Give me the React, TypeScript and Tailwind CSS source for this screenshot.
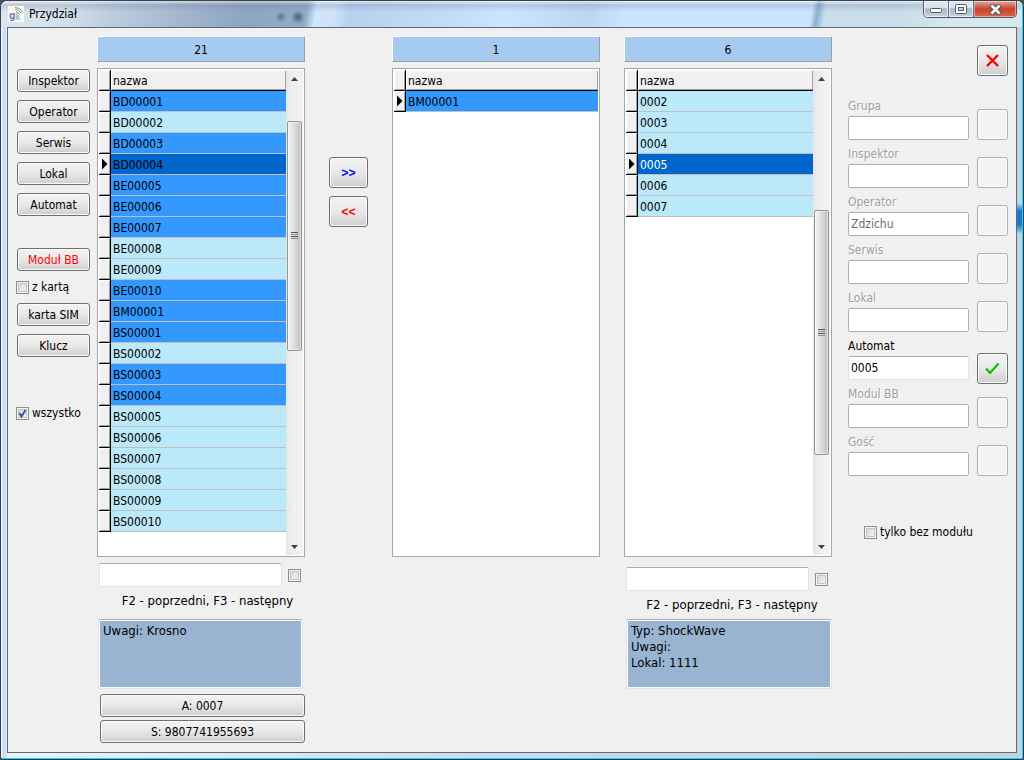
import { useState, type ReactNode } from "react";

type Tone = "blue" | "light" | "selected";

type Row = {
  name: string;
  tone: Tone;
  current?: boolean;
  lightText?: boolean;
};

type Scroll = {
  before: number;
  thumb: number;
  after: number;
};

type Field = {
  id: string;
  label: string;
  value: string;
  enabled?: boolean;
};

const toneClass: Record<Tone, string> = {
  blue: "bg-[#3399ff]",
  light: "bg-[#bbe9f9]",
  selected: "bg-[#0066cc]",
};

const modules: Row[] = [
  { name: "BD00001", tone: "blue" },
  { name: "BD00002", tone: "light" },
  { name: "BD00003", tone: "blue" },
  { name: "BD00004", tone: "selected", current: true },
  { name: "BE00005", tone: "blue" },
  { name: "BE00006", tone: "blue" },
  { name: "BE00007", tone: "blue" },
  { name: "BE00008", tone: "light" },
  { name: "BE00009", tone: "light" },
  { name: "BE00010", tone: "blue" },
  { name: "BM00001", tone: "blue" },
  { name: "BS00001", tone: "blue" },
  { name: "BS00002", tone: "light" },
  { name: "BS00003", tone: "blue" },
  { name: "BS00004", tone: "blue" },
  { name: "BS00005", tone: "light" },
  { name: "BS00006", tone: "light" },
  { name: "BS00007", tone: "light" },
  { name: "BS00008", tone: "light" },
  { name: "BS00009", tone: "light" },
  { name: "BS00010", tone: "light" },
];

const assigned: Row[] = [{ name: "BM00001", tone: "blue", current: true }];

const machines: Row[] = [
  { name: "0002", tone: "light" },
  { name: "0003", tone: "light" },
  { name: "0004", tone: "light" },
  { name: "0005", tone: "selected", current: true, lightText: true },
  { name: "0006", tone: "light" },
  { name: "0007", tone: "light" },
];

const fields: Field[] = [
  { id: "grupa", label: "Grupa", value: "" },
  { id: "inspektor", label: "Inspektor", value: "" },
  { id: "operator", label: "Operator", value: "Zdzichu" },
  { id: "serwis", label: "Serwis", value: "" },
  { id: "lokal", label: "Lokal", value: "" },
  { id: "automat", label: "Automat", value: "0005", enabled: true },
  { id: "modul", label: "Modul BB", value: "" },
  { id: "gosc", label: "Gość", value: "" },
];

const buttonLook =
  "flex items-center justify-center rounded-[3px] border border-[#707070] bg-linear-to-b from-[#f3f3f3] from-0% via-[#e8e8e8] via-50% to-[#cfcfcf] shadow-[inset_0_0_0_1px_#fafafa]";

const editLook =
  "h-6 min-w-0 rounded-[2px] border border-[#e2e3ea] border-t-[#abadb3] bg-white px-0.5 outline-none";

const Button = ({ children, className = "" }: { children: ReactNode; className?: string }) => (
  <button type="button" className={`${buttonLook} h-[23px] w-full pt-px ${className}`}>
    {children}
  </button>
);

const CheckBox = ({ label, name, initial = false }: { label?: string; name: string; initial?: boolean }) => {
  const [checked, setChecked] = useState(initial);
  return (
    <label className="flex items-center gap-[3px] whitespace-nowrap">
      <span className="grid size-[13px]">
        <input
          type="checkbox"
          aria-label={label ? undefined : name}
          checked={checked}
          onChange={(e) => setChecked(e.target.checked)}
          className="size-[13px] appearance-none border border-[#8e8f8f] bg-linear-to-br from-[#ced2d7] to-[#fbfbfb] shadow-[inset_0_0_0_1px_#f4f4f4,inset_0_0_0_2px_#c2c6cb] [grid-area:1/1]"
        />
        {checked && (
          <svg viewBox="0 0 13 13" className="pointer-events-none size-[13px] [grid-area:1/1]" fill="none">
            <path d="M3.5 6 L5.5 9.5 L9.5 3" stroke="#3a55a0" strokeWidth="2" />
          </svg>
        )}
      </span>
      {label}
    </label>
  );
};

const ScrollBar = ({ scroll }: { scroll: Scroll }) => (
  <div className="flex w-[17px] shrink-0 flex-col items-center bg-linear-to-r from-[#e6e6e6] via-[#f0f0f0] to-[#f3f3f3]">
    <svg viewBox="0 0 17 17" className="size-[17px] shrink-0">
      <path d="M5 11 L8.5 7 L12 11 Z" fill="#404040" />
    </svg>
    <div style={{ flex: `${scroll.before} 1 0px` }} />
    <div
      className="flex w-[15px] flex-col items-center justify-center gap-px rounded-[2px] border border-[#959595] bg-linear-to-r from-[#f5f5f5] via-[#dcdcde] to-[#bdbdc2] shadow-[inset_0_0_0_1px_#fafafa80]"
      style={{ flex: `${scroll.thumb} 1 0px` }}
    >
      <span className="h-px w-[7px] bg-[#505050]" />
      <span className="h-px w-[7px] bg-[#909090]" />
      <span className="h-px w-[7px] bg-[#505050]" />
      <span className="h-px w-[7px] bg-[#909090]" />
    </div>
    <div style={{ flex: `${scroll.after} 1 0px` }} />
    <svg viewBox="0 0 17 17" className="size-[17px] shrink-0">
      <path d="M5 7 L8.5 11 L12 7 Z" fill="#404040" />
    </svg>
  </div>
);

const cellEdge = "shadow-[inset_1px_1px_0_#fff,inset_-1px_-1px_0_#a0a0a0]";

const List = ({ rows, count, scroll }: { rows: Row[]; count: number; scroll?: Scroll }) => (
  <>
    <div className="h-[26px] border border-t-white border-r-[#a0a0a0] border-b-[#a0a0a0] border-l-white bg-[#a6caf0] text-center leading-[26px]">
      {count}
    </div>
    <div className="mt-1.5 flex flex-1 border border-[#a7a7ab] bg-white p-px">
      <div className="flex-1">
        <table className="w-full border-separate border-spacing-0">
          <thead>
            <tr className="h-[21px]">
              <th className={`w-3 border-r border-b border-black bg-[#f0f0f0] p-0 ${cellEdge}`} />
              <th className={`border-b border-black bg-[#f0f0f0] px-0.5 pt-0.5 pb-0 text-left font-normal ${cellEdge}`}>
                nazwa
              </th>
            </tr>
          </thead>
          <tbody>
            {rows.map((row) => (
              <tr key={row.name} className="h-[21px]">
                <td className={`w-3 border-r border-b border-black bg-[#f0f0f0] p-0 ${cellEdge}`}>
                  {row.current && (
                    <svg viewBox="0 0 11 12" className="h-3 w-[11px]">
                      <path d="M3 0.5 L8.5 6 L3 11.5 Z" fill="#000" />
                    </svg>
                  )}
                </td>
                <td
                  className={`border-b border-[#c0c0c0] px-0.5 pt-0.5 pb-0 ${toneClass[row.tone]} ${
                    row.lightText ? "text-white" : ""
                  }`}
                >
                  {row.name}
                </td>
              </tr>
            ))}
          </tbody>
        </table>
      </div>
      {scroll && <ScrollBar scroll={scroll} />}
    </div>
  </>
);

const Search = ({ name }: { name: string }) => (
  <div className="ml-0.5 flex gap-1.5 pr-1">
    <input type="text" aria-label={name} className={`${editLook} flex-1`} />
    <div className="self-center">
      <CheckBox name={`${name} - filtr`} />
    </div>
  </div>
);

const Memo = ({ name, text }: { name: string; text: string }) => (
  <textarea
    aria-label={name}
    readOnly
    value={text}
    className="block h-[70px] w-full resize-none overflow-hidden rounded-[2px] border border-[#e2e3ea] border-t-[#abadb3] bg-[#99b4d1] px-1 py-[3px] text-[13px] leading-4 shadow-[inset_0_0_0_1px_#fff] outline-none"
  />
);

const FieldRow = ({ field }: { field: Field }) => {
  const [value, setValue] = useState(field.value);
  return (
    <div className="flex flex-col gap-px">
      <label
        htmlFor={field.id}
        className={`leading-[18px] ${field.enabled ? "" : "text-[#a0a0a0] [text-shadow:1px_1px_0_#fff]"}`}
      >
        {field.label}
      </label>
      <div className={`flex h-6 gap-2 ${field.enabled ? "items-center" : "items-end"}`}>
        <input
          id={field.id}
          type="text"
          value={value}
          disabled={!field.enabled}
          onChange={(e) => setValue(e.target.value)}
          className={
            field.enabled
              ? `${editLook} w-full flex-1`
              : "h-6 w-full min-w-0 flex-1 rounded-[2px] border border-[#afafaf] bg-white px-0.5 text-[#6d6d6d]"
          }
        />
        {field.enabled ? (
          <button type="button" aria-label={`Zatwierdź ${field.label}`} className={`${buttonLook} size-[31px] shrink-0`}>
            <svg viewBox="0 0 15 13" className="h-[13px] w-[15px]" fill="none">
              <path d="M1 6.5 L5 11 L13.5 1.5" stroke="#00c000" strokeWidth="2" />
            </svg>
          </button>
        ) : (
          <button
            type="button"
            disabled
            aria-label={field.label}
            className="size-[31px] shrink-0 rounded-[3px] border border-[#adb2b5] bg-[#f4f4f4] shadow-[inset_0_0_0_1px_#fcfcfc]"
          />
        )}
      </div>
    </div>
  );
};

const AppIcon = () => (
  <svg viewBox="0 0 16 16" className="size-4 bg-[#fdf8ec]">
    <g fill="none" stroke="#8c8c8c" strokeWidth="1">
      <path d="M7 1.5 Q12 1 15 6.5" />
      <path d="M7 3.5 Q11 3.5 13 7" />
      <path d="M8 6 Q10 6 11 8" />
    </g>
    <text x="1" y="13" fontSize="10" fontWeight="bold" fill="#7a7fc0">
      g
    </text>
    <text x="7" y="14" fontSize="9" fontWeight="bold" fill="#8fc4cf">
      k
    </text>
  </svg>
);

const captionLook = "flex items-center justify-center border-r border-[#5c6b80] shadow-[inset_0_0_0_1px_#ffffffa0]";
const captionFill = "bg-linear-to-b from-[#dbe5ee] from-40% via-[#a9b8c8] via-50% to-[#c5d5e2]";

const TitleBar = () => (
  <header className="flex h-[26px] shrink-0 border-r border-[#22d3f5] bg-[radial-gradient(circle_at_280px_16px,#4a607cb0_0px,#4a607c00_6px),radial-gradient(circle_at_297px_16px,#33475fc0_0px,#33475f00_7px),linear-gradient(180deg,#ffffff80_0px,#5f78a040_4px,#ffffff00_11px),linear-gradient(100deg,#dbe6ee_0px,#d2dfea_70px,#bccddf_110px,#a3b6cd_180px,#8fa5c1_240px,#94aac6_303px,#cfe5fc_312px,#cfe2f8_330px,#b7d2ee_345px,#c3dbf6_440px,#cee4fe_500px,#bcd6f2_580px,#cee4fe_620px,#cee4fe_800px,#8caed2_806px,#c8dfe9_814px,#c9dee8_890px,#d7e8ef_940px)] pr-[5px] pl-[7px]">
    <div className="flex flex-1 items-center gap-[5px]">
      <AppIcon />
      <h1>Przydział</h1>
    </div>
    <div className="flex h-[17px] overflow-hidden rounded-b-[5px] border border-t-0 border-[#4c586a]">
      <button type="button" aria-label="Minimalizuj" className={`${captionLook} ${captionFill} w-[25px]`}>
        <svg viewBox="0 0 12 6" className="mt-1 h-1.5 w-3">
          <rect x="0.5" y="0.5" width="11" height="4" rx="1" fill="#fff" stroke="#535666" />
        </svg>
      </button>
      <button type="button" aria-label="Maksymalizuj" className={`${captionLook} ${captionFill} w-[25px]`}>
        <svg viewBox="0 0 12 10" className="h-2.5 w-3">
          <rect x="0.5" y="0.5" width="11" height="9" rx="1" fill="#fff" stroke="#535666" />
          <rect x="3.5" y="3.5" width="5" height="3" fill="#c5d5e2" stroke="#535666" />
        </svg>
      </button>
      <button
        type="button"
        aria-label="Zamknij"
        className="flex w-[42px] items-center justify-center bg-linear-to-b from-[#e5a99a] from-0% via-[#c8402a] via-50% to-[#d8674a] shadow-[inset_0_0_0_1px_#ffffff70]"
      >
        <svg viewBox="0 0 13 11" className="h-[11px] w-[13px]" fill="none">
          <path d="M2 1 L11 10 M11 1 L2 10" stroke="#535666" strokeWidth="5" />
          <path d="M2.5 1.5 L10.5 9.5 M10.5 1.5 L2.5 9.5" stroke="#fff" strokeWidth="2.5" />
        </svg>
      </button>
    </div>
  </header>
);

export default function App() {
  return (
    <div className="min-h-screen bg-[#4a4f58] font-['DejaVu_Sans_Condensed','DejaVu_Sans',sans-serif] text-[12px] leading-4 text-black">
      <div className="flex min-h-screen flex-col overflow-hidden rounded-t-[7px] rounded-b-[4px] border border-t-[#3b414c] border-r-[#263848] border-b-[#263848] border-l-[#3b414c] bg-[#c5dbf0]">
        <TitleBar />
        <div className="flex flex-1 flex-col border-r border-b border-[#22d3f5] pr-[5px] pb-[5px] pl-1.5 [background:linear-gradient(180deg,#1c78d800_176px,#1c78d8_184px,#1c78d8_198px,#1c78d800_207px)_right/5px_100%_no-repeat,linear-gradient(90deg,#f4faff_0px,#cfe2f7_2px,#c3d9f0_4px,#eaf3fb_6px,#c9dcef_50%,#bdd5e2_100%)]">
          <main className="flex flex-1 border border-[#5d6b7a] bg-[#f0f0f0] pr-2 pl-[9px]">
            <nav className="flex w-[73px] shrink-0 flex-col gap-2 pt-[41px]">
              <Button>Inspektor</Button>
              <Button>Operator</Button>
              <Button>Serwis</Button>
              <Button>Lokal</Button>
              <Button>Automat</Button>
              <div className="mt-6 flex flex-col gap-2">
                <Button className="text-[#ff0000]">Moduł BB</Button>
                <div className="-ml-px">
                  <CheckBox name="karta" label="z kartą" />
                </div>
                <Button>karta SIM</Button>
                <Button>Klucz</Button>
              </div>
              <div className="mt-10 -ml-px">
                <CheckBox name="wszystko" label="wszystko" initial />
              </div>
            </nav>

            <section className="ml-[7px] flex flex-1 flex-col pt-2">
              <List rows={modules} count={21} scroll={{ before: 34, thumb: 229, after: 188 }} />
              <div className="h-[195px] pt-1.5">
                <Search name="Szukaj modułu" />
                <p className="mt-1.5 pl-[13px] text-center text-[13px] leading-4">F2 - poprzedni, F3 - następny</p>
                <div className="mt-2.5 mr-0.5 ml-px">
                  <Memo name="Uwagi modułu" text="Uwagi: Krosno" />
                </div>
                <div className="mt-[5px] ml-[3px] flex flex-col gap-[3px]">
                  <Button>A: 0007</Button>
                  <Button>S: 9807741955693</Button>
                </div>
              </div>
            </section>

            <div className="mx-6 flex w-[39px] shrink-0 flex-col gap-2 pt-[129px] font-['Liberation_Mono',monospace] font-bold">
              <button type="button" className={`${buttonLook} h-[31px] pt-[3px] text-[#0000ff]`}>
                {">>"}
              </button>
              <button type="button" className={`${buttonLook} h-[31px] pt-[3px] text-[#ff0000]`}>
                {"<<"}
              </button>
            </div>

            <section className="flex flex-1 flex-col pt-2 pb-[195px]">
              <List rows={assigned} count={1} />
            </section>

            <section className="ml-6 flex flex-1 flex-col pt-2">
              <List rows={machines} count={6} scroll={{ before: 124, thumb: 244, after: 83 }} />
              <div className="h-[195px] pt-2.5">
                <Search name="Szukaj automatu" />
                <p className="mt-1.5 pl-2 text-center text-[13px] leading-4">F2 - poprzedni, F3 - następny</p>
                <div className="mt-1.5 ml-0.5">
                  <Memo name="Opis automatu" text={"Typ: ShockWave\nUwagi:\nLokal: 1111"} />
                </div>
              </div>
            </section>

            <aside className="ml-4 w-40 shrink-0 pt-[17px]">
              <button type="button" aria-label="Zamknij okno" className={`${buttonLook} ml-auto size-[31px]`}>
                <svg viewBox="0 0 13 13" className="size-[13px]" fill="none">
                  <path d="M1 1 L12 12 M12 1 L1 12" stroke="#ff0000" strokeWidth="2.4" />
                </svg>
              </button>
              <div className="mt-[21px] flex flex-col gap-[5px]">
                {fields.map((field) => (
                  <FieldRow key={field.id} field={field} />
                ))}
              </div>
              <div className="mt-12 ml-4">
                <CheckBox name="bez" label="tylko bez modułu" />
              </div>
            </aside>
          </main>
        </div>
      </div>
    </div>
  );
}
